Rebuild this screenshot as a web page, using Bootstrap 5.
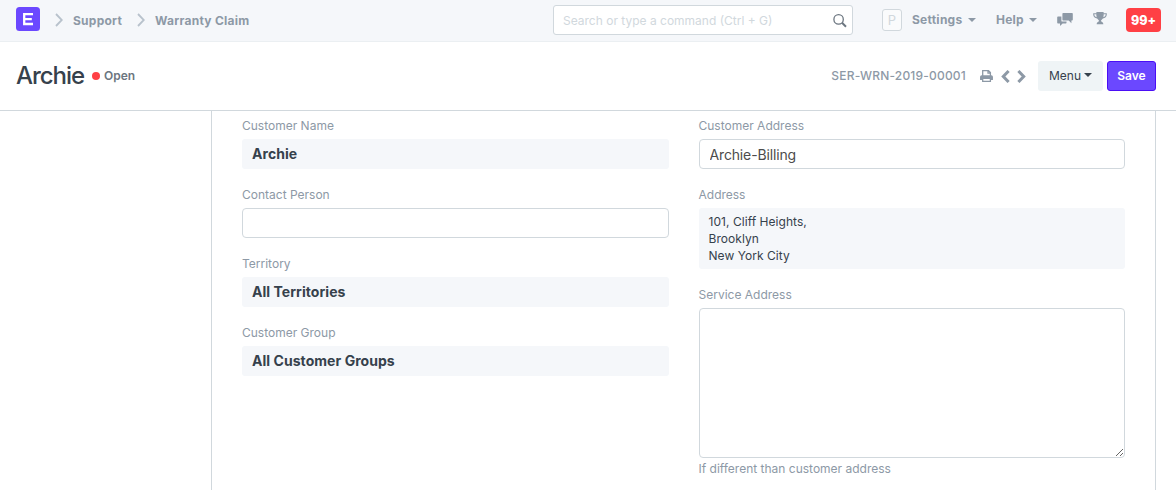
<!DOCTYPE html>
<html lang="en">
<head>
<meta charset="utf-8">
<meta name="viewport" content="width=device-width, initial-scale=1">
<title>Archie - Warranty Claim</title>
<link href="https://cdn.jsdelivr.net/npm/bootstrap@5.3.0/dist/css/bootstrap.min.css" rel="stylesheet">
<style>
  body { font-family: Inter, "Open Sans", sans-serif; font-size: 12px; line-height: 17px; color: #36414c; height: 490px; overflow: hidden; }
  .soft { color: #8d99a6; }
  .topbar { height: 42px; background: #f5f7fa; border-bottom: 1px solid #ebeff2; padding: 0 15px 1px 16px; }
  .crumb { font-weight: 700; color: #8d99a6; text-decoration: none; letter-spacing: .25px; }
  .logo { width: 24px; height: 24px; margin-top: -3px; }
  .chev { width: 8px; height: 14px; }
  .crumb-chev { margin: 0 10px 0 15px; }
  .search { width: 300px; height: 30px; }
  .search .form-control { height: 30px; font-size: 12px; border-color: #d1d8dd; border-radius: 3px; padding: 0 30px 0 9px; }
  .search .form-control::placeholder { color: #d1d8dd; opacity: 1; }
  .search svg { right: 6px; top: 9px; }
  .avatar-box { width: 20px; height: 22px; border: 1px solid #d1d8dd; border-radius: 3px; background: #fafbfc; color: #d1d8dd; font-size: 13px; margin: 0 10px 0 29px; }
  .arrow { display: inline-block; border: 4px solid transparent; border-top-color: currentColor; border-bottom: 0; }
  .link-box { display: flex; align-items: center; justify-content: space-between; }
  .link-settings { width: 64px; margin-right: 20px; margin-top: -1px; }
  .link-help { width: 41px; margin-right: 20px; margin-top: -1px; }
  .count { background: #ff4045; color: #fff; border-radius: 4px; width: 35px; height: 24px; font-size: 12.500px; font-weight: 800; margin: -1px 0 0 19px; padding-top: 1px; }
  .pagehead { height: 69px; border-bottom: 1px solid #d1d8dd; padding: 0 20px 0 16px; }
  .doc-title { font-size: 24px; line-height: 30px; font-weight: 500; letter-spacing: -1.05px; }
  .dot { width: 8px; height: 8px; border-radius: 50%; background: #ff4045; margin-left: 8px; }
  .state { margin: -2px 0 0 4px; font-weight: 600; color: #6c7680; }
  .doc-id { font-weight: 500; letter-spacing: .2px; margin-top: -2px; }
  .act { --bs-btn-font-size: 12px; --bs-btn-line-height: 17px; --bs-btn-border-radius: 3px; --bs-btn-padding-x: 0; height: 30px; }
  .act.btn { padding: 0 0 2px; }
  .act-menu { width: 65px; color: #36414c; background: #eff4f6; font-weight: 400; margin-left: 12px; }
  .act-save { width: 49px; color: #fff; background: #6b48ff; border-color: #4b0ef5; font-weight: 600; margin-left: 4px; }
  .sheet { margin: 0 20px 0 211px; height: 379px; border: solid #d1d8dd; border-width: 0 1px; padding: 6px 30px 0; }
  .cols { display: grid; grid-template-columns: 1fr 1fr; gap: 30px; }
  .field { margin-bottom: 17px; }
  .field label { display: block; line-height: 17px; margin-bottom: 5px; color: #8d99a6; }
  .field .form-control { font-size: 14px; line-height: 20px; height: 30px; border-color: #d1d8dd; border-radius: 4px; padding: 4px 10px; color: #4c4c4c; letter-spacing: -.15px; }
  .field textarea.form-control { height: 150px; }
  .readonly { background: #f5f7fa; border-radius: 3px; padding: 5px 10px; font-size: 14px; line-height: 20px; font-weight: 700; letter-spacing: .05px; }
  .readonly.addr { font-size: 12px; line-height: 17px; font-weight: 400; }
  .hint { margin-top: 2px; }
</style>
</head>
<body>
<nav class="topbar d-flex align-items-center">
  <svg class="logo" viewBox="0 0 24 24"><rect width="24" height="24" rx="3.5" fill="#6b48ff"/><path d="M17 7.200H8.200v9.800H17M8.200 12.100h7.600" fill="none" stroke="#fff" stroke-width="2.300"/></svg>
  <svg class="chev crumb-chev" viewBox="0 0 8 14"><path d="M1 1l5.800 6L1 13" fill="none" stroke="#b8c2cc" stroke-width="1.8"/></svg>
  <a class="crumb" href="#">Support</a>
  <svg class="chev crumb-chev" viewBox="0 0 8 14"><path d="M1 1l5.800 6L1 13" fill="none" stroke="#b8c2cc" stroke-width="1.8"/></svg>
  <a class="crumb" href="#">Warranty Claim</a>
  <div class="d-flex align-items-center ms-auto">
    <div class="search position-relative">
      <input class="form-control shadow-none" type="text" placeholder="Search or type a command (Ctrl + G)">
      <svg class="position-absolute" width="14" height="14" viewBox="0 0 14 14" fill="none" stroke="#6c7680"><circle cx="5.6" cy="5.4" r="4.7" stroke-width="1.3"/><path d="M9 8.800l4 4" stroke-width="2"/></svg>
    </div>
    <span class="avatar-box d-flex align-items-center justify-content-center">P</span>
    <a class="crumb link-box link-settings" href="#">Settings<i class="arrow"></i></a>
    <a class="crumb link-box link-help" href="#">Help<i class="arrow"></i></a>
    <svg style="margin-top:-2px" width="16" height="13" viewBox="0 0 16 13" fill="#8d99a6"><path d="M6.200 0H15q.8 0 .8.8v6q0 .8-.8.8h-.6v2.700L11.700 7.600H6.200q-.8 0-.8-.8v-6Q5.400 0 6.200 0z"/><path d="M1 3.500h3.400v4.200q0 .9.900.9h4.200v1.200q0 .7-.7.700H5.600L3 12.900v-2.400H1q-.8 0-.8-.7V4.200q0-.7.8-.7z"/></svg>
    <svg style="margin-left:20px;margin-top:-4px" width="14" height="13" viewBox="0 0 14 13" fill="#8d99a6"><path d="M3.400 0h7.200v1.300h3.200v1.200c0 2.300-1.700 3.800-3.900 4C9.400 7.400 8 7.900 8 9c0 1 2.300.9 2.300 2.700V12.300H3.700v-.6C3.700 9.900 6 10 6 9c0-1.100-1.400-1.600-1.900-2.500C1.900 6.300.2 4.800.2 2.500V1.300h3.200zM1.300 2.300c0 1.500.9 2.600 2.400 3-.3-.9-.4-1.900-.4-3zm11.400 0h-2c0 1.100-.1 2.100-.4 3 1.500-.4 2.400-1.500 2.400-3z" fill-rule="evenodd"/></svg>
    <span class="count d-flex align-items-center justify-content-center">99+</span>
  </div>
</nav>
<header class="pagehead d-flex align-items-center">
  <span class="doc-title">Archie</span>
  <i class="dot"></i>
  <span class="state">Open</span>
  <div class="d-flex align-items-center ms-auto">
    <span class="soft doc-id">SER-WRN-2019-00001</span>
    <svg style="margin-left:14px" width="13" height="12" viewBox="0 0 13 12" fill="none" stroke="#8d99a6" stroke-width="1.3"><path d="M2.700 6V.7h5.800l1.900 1.900V6M8 .7v2.400h2.400"/><path d="M.7 9.300V7q0-1 1-1h9.600q1 0 1 1v2.300z" fill="#8d99a6"/><path d="M2.700 8.300h7.700v3H2.700z" fill="#fff"/></svg>
    <svg style="margin-left:8px" width="9" height="13" viewBox="0 0 9 13" fill="none" stroke="#8d99a6" stroke-width="3"><path d="M7.600 1L2.300 6.500 7.600 12"/></svg>
    <svg style="margin-left:7px" width="9" height="13" viewBox="0 0 9 13" fill="none" stroke="#8d99a6" stroke-width="3"><path d="M1.400 1l5.300 5.500L1.400 12"/></svg>
    <button class="btn act act-menu d-flex align-items-center justify-content-center">Menu<i class="arrow" style="margin-left:3px"></i></button>
    <button class="btn act act-save d-flex align-items-center justify-content-center">Save</button>
  </div>
</header>
<main class="sheet">
  <div class="cols">
    <section>
      <div class="field"><label>Customer Name</label><div class="readonly">Archie</div></div>
      <div class="field"><label>Contact Person</label><input class="form-control shadow-none" type="text"></div>
      <div class="field"><label>Territory</label><div class="readonly">All Territories</div></div>
      <div class="field"><label>Customer Group</label><div class="readonly">All Customer Groups</div></div>
    </section>
    <section>
      <div class="field"><label>Customer Address</label><input class="form-control shadow-none" type="text" value="Archie-Billing"></div>
      <div class="field"><label>Address</label><div class="readonly addr">101, Cliff Heights,<br>Brooklyn<br>New York City</div></div>
      <div class="field"><label>Service Address</label><textarea class="form-control shadow-none"></textarea><div class="soft hint">If different than customer address</div></div>
    </section>
  </div>
</main>
<script src="https://cdn.jsdelivr.net/npm/bootstrap@5.3.0/dist/js/bootstrap.bundle.min.js"></script>
</body>
</html>
